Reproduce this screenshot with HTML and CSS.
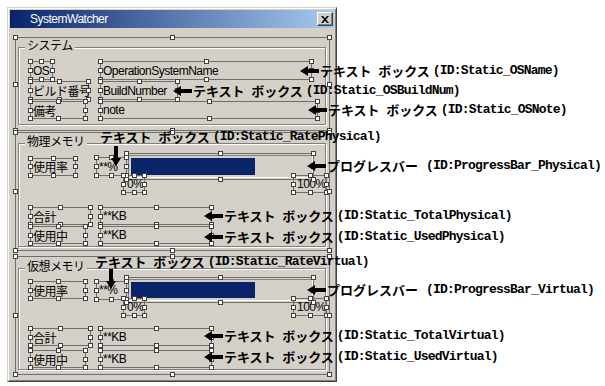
FILE: index.html
```html
<!DOCTYPE html>
<html lang="ja">
<head>
<meta charset="utf-8">
<title>SystemWatcher</title>
<link rel="stylesheet" href="styles.css">
</head>
<body>
<div class="page">
  <div class="win">
    <div class="titlebar">
      <span class="title">SystemWatcher</span>
      <span class="close"><svg width="8" height="7" viewBox="0 0 8 7"><path d="M0 0h2l2 2.3 2-2.3h2L5 3.5 8 7H6L4 4.7 2 7H0l3-3.5z" fill="#000"/></svg></span>
    </div>
    <div class="client">
      <div class="ctl grp g-sys">
        <div class="frame f-sys">
          <span class="legend">システム</span>
          <div class="form">
            <div class="ctl w23">OS</div>
            <div class="ctl w212">OperationSystemName</div>
            <div class="ctl w59">ビルド番号</div>
            <div class="ctl w78">BuildNumber</div>
            <div class="ctl w56 h18">備考</div>
            <div class="ctl w218 h18">note</div>
          </div>
        </div>
      </div>

      <div class="ctl grp g-phys">
        <div class="frame f-phys">
          <span class="legend">物理メモリ</span>
          <div class="rate">
            <div class="ctl w46 h18">使用率</div>
            <div class="ctl pct">**%</div>
            <div class="ctl prog"><div class="bar"><div class="fill" style="width:69%"></div></div></div>
          </div>
          <div class="scale">
            <div class="ctl s0">0%</div>
            <div class="ctl s100">100%</div>
          </div>
          <div class="form mem">
            <div class="ctl w61">合計</div>
            <div class="ctl w112">**KB</div>
            <div class="ctl w56">使用中</div>
            <div class="ctl w112">**KB</div>
          </div>
        </div>
      </div>

      <div class="ctl grp g-virt">
        <div class="frame f-virt">
          <span class="legend">仮想メモリ</span>
          <div class="rate">
            <div class="ctl w56 h18">使用率</div>
            <div class="ctl pct">**%</div>
            <div class="ctl prog"><div class="bar"><div class="fill" style="width:69%"></div></div></div>
          </div>
          <div class="scale">
            <div class="ctl s0">0%</div>
            <div class="ctl s100">100%</div>
          </div>
          <div class="form mem">
            <div class="ctl w61">合計</div>
            <div class="ctl w112">**KB</div>
            <div class="ctl w56">使用中</div>
            <div class="ctl w112">**KB</div>
          </div>
        </div>
      </div>
    </div>
  </div>

  <div class="note n1"><svg class="arrow" viewBox="0 0 19 10"><polygon points="0,5 8,0 8,3 19,3 19,7 8,7 8,10"/></svg><span class="jp">テキスト ボックス</span><span class="id">(ID:Static_OSName)</span></div>
  <div class="note n2"><svg class="arrow" viewBox="0 0 19 10"><polygon points="0,5 8,0 8,3 19,3 19,7 8,7 8,10"/></svg><span class="jp">テキスト ボックス</span><span class="id">(ID:Static_OSBuildNum)</span></div>
  <div class="note n3"><svg class="arrow" viewBox="0 0 19 10"><polygon points="0,5 8,0 8,3 19,3 19,7 8,7 8,10"/></svg><span class="jp">テキスト ボックス</span><span class="id">(ID:Static_OSNote)</span></div>
  <div class="note n4"><span class="jp">テキスト ボックス</span><span class="id">(ID:Static_RatePhysical)</span></div>
  <svg class="darrow d1" viewBox="0 0 10 20"><polygon points="3,0 7,0 7,12 10,12 5,20 0,12 3,12"/></svg>
  <div class="note n5"><svg class="arrow" viewBox="0 0 19 10"><polygon points="0,5 8,0 8,3 19,3 19,7 8,7 8,10"/></svg><span class="jp">プログレスバー</span><span class="id gap">(ID:ProgressBar_Physical)</span></div>
  <div class="note n6"><svg class="arrow" viewBox="0 0 19 10"><polygon points="0,5 8,0 8,3 19,3 19,7 8,7 8,10"/></svg><span class="jp">テキスト ボックス</span><span class="id">(ID:Static_TotalPhysical)</span></div>
  <div class="note n7"><svg class="arrow" viewBox="0 0 19 10"><polygon points="0,5 8,0 8,3 19,3 19,7 8,7 8,10"/></svg><span class="jp">テキスト ボックス</span><span class="id">(ID:Static_UsedPhysical)</span></div>
  <div class="note n8"><span class="jp">テキスト ボックス</span><span class="id">(ID:Static_RateVirtual)</span></div>
  <svg class="darrow d2" viewBox="0 0 10 20"><polygon points="3,0 7,0 7,12 10,12 5,20 0,12 3,12"/></svg>
  <div class="note n9"><svg class="arrow" viewBox="0 0 19 10"><polygon points="0,5 8,0 8,3 19,3 19,7 8,7 8,10"/></svg><span class="jp">プログレスバー</span><span class="id gap">(ID:ProgressBar_Virtual)</span></div>
  <div class="note n10"><svg class="arrow" viewBox="0 0 19 10"><polygon points="0,5 8,0 8,3 19,3 19,7 8,7 8,10"/></svg><span class="jp">テキスト ボックス</span><span class="id">(ID:Static_TotalVirtual)</span></div>
  <div class="note n11"><svg class="arrow" viewBox="0 0 19 10"><polygon points="0,5 8,0 8,3 19,3 19,7 8,7 8,10"/></svg><span class="jp">テキスト ボックス</span><span class="id">(ID:Static_UsedVirtual)</span></div>
</div>
</body>
</html>
```

FILE: styles.css
```css
html, body {
  margin: 0;
  background: #fff;
}

.page {
  position: relative;
  box-sizing: border-box;
  width: 605px;
  height: 386px;
  padding: 7px 0 0 7px;
  overflow: hidden;
  font-family: "Liberation Sans", "Noto Sans CJK JP", sans-serif;
  font-size: 12px;
  color: #000;
}

/* ---------- window chrome ---------- */
.win {
  box-sizing: border-box;
  width: 330px;
  height: 375px;
  padding: 2px;
  border: 1px solid;
  border-color: #d4d0c8 #404040 #404040 #d4d0c8;
  box-shadow: inset 1px 1px 0 #fff, inset -1px -1px 0 #808080;
  background: #d4d0c8;
  display: flex;
  flex-direction: column;
}

.titlebar {
  flex: none;
  height: 18px;
  display: flex;
  align-items: center;
  padding-left: 20px;
  background: linear-gradient(90deg, #0a246a, #a6caf0);
}

.title {
  color: #fff;
  font-size: 12px;
  letter-spacing: -0.5px;
  line-height: 18px;
}

.close {
  box-sizing: border-box;
  margin-left: auto;
  margin-right: 1px;
  width: 16px;
  height: 14px;
  display: flex;
  align-items: center;
  justify-content: center;
  background: #d4d0c8;
  border: 1px solid;
  border-color: #fff #404040 #404040 #fff;
  box-shadow: inset -1px -1px 0 #808080;
}

.client {
  flex: 1;
  padding: 9px 0 0 5px;
}

/* ---------- selected control (dialog editor) ---------- */
.ctl {
  position: relative;
  box-sizing: border-box;
  border: 1px solid #6e6e6e;
  display: flex;
  align-items: center;
  padding: 0 2px;
  white-space: nowrap;
  letter-spacing: -0.5px;
}

.ctl::after {
  content: "";
  position: absolute;
  inset: -3px;
  pointer-events: none;
  z-index: 2;
  background:
    linear-gradient(#fff, #fff) left 1px top 1px / 3px 3px no-repeat,
    linear-gradient(#fff, #fff) left 50% top 1px / 3px 3px no-repeat,
    linear-gradient(#fff, #fff) right 1px top 1px / 3px 3px no-repeat,
    linear-gradient(#fff, #fff) left 1px top 50% / 3px 3px no-repeat,
    linear-gradient(#fff, #fff) right 1px top 50% / 3px 3px no-repeat,
    linear-gradient(#fff, #fff) left 1px bottom 1px / 3px 3px no-repeat,
    linear-gradient(#fff, #fff) left 50% bottom 1px / 3px 3px no-repeat,
    linear-gradient(#fff, #fff) right 1px bottom 1px / 3px 3px no-repeat,
    linear-gradient(#404040, #404040) 0 0 / 5px 5px no-repeat,
    linear-gradient(#404040, #404040) 50% 0 / 5px 5px no-repeat,
    linear-gradient(#404040, #404040) 100% 0 / 5px 5px no-repeat,
    linear-gradient(#404040, #404040) 0 50% / 5px 5px no-repeat,
    linear-gradient(#404040, #404040) 100% 50% / 5px 5px no-repeat,
    linear-gradient(#404040, #404040) 0 100% / 5px 5px no-repeat,
    linear-gradient(#404040, #404040) 50% 100% / 5px 5px no-repeat,
    linear-gradient(#404040, #404040) 100% 100% / 5px 5px no-repeat;
}

/* ---------- group boxes ---------- */
.grp {
  display: block;
  padding: 0;
  width: 315px;
}

.g-sys { height: 94px; }
.g-phys { height: 119px; margin-top: 1px; }
.g-virt { height: 119px; margin-top: 5px; }

.frame {
  position: relative;
  box-sizing: border-box;
  width: 308px;
  margin-left: 2px;
  padding-left: 11px;
  border: 1px solid #808080;
  box-shadow: inset 1px 1px 0 #fff, 1px 1px 0 #fff;
}

.f-sys { margin-top: 9px; height: 78px; padding-top: 13px; }
.f-phys { margin-top: 10px; height: 104px; padding-top: 9px; }
.f-virt { margin-top: 11px; height: 102px; padding-top: 8px; }

.legend {
  position: absolute;
  left: 6px;
  top: -9px;
  padding: 0 2px;
  line-height: 14px;
  background: #d4d0c8;
  letter-spacing: -0.5px;
}

/* ---------- label / value grids ---------- */
.form {
  display: grid;
  grid-template-columns: 70px max-content;
  row-gap: 1px;
  align-items: start;
  justify-items: start;
}

.form .ctl { height: 19px; }
.form .h18 { height: 18px; }

.mem { margin-top: 14px; }
.mem .ctl { height: 18px; }
.f-virt .mem { margin-top: 12px; row-gap: 4px; }

.w23 { width: 23px; }
.w46 { width: 46px; }
.w56 { width: 56px; }
.w59 { width: 59px; }
.w61 { width: 61px; }
.w78 { width: 78px; }
.w112 { width: 112px; }
.w212 { width: 212px; }
.w218 { width: 218px; }
.h18 { height: 18px; }

/* ---------- usage rate row ---------- */
.rate {
  display: grid;
  grid-template-columns: 66px 30px auto;
  grid-template-rows: 27px;
  align-items: center;
  justify-items: start;
}

.f-virt .rate { grid-template-rows: 26px; }

.pct {
  width: 31px;
  height: 19px;
}

.prog {
  align-self: stretch;
  width: 188px;
  padding: 1px 0 1px 1px;
  align-items: stretch;
}

.bar {
  flex: 1;
  box-sizing: border-box;
  padding: 2px;
  border: 1px solid;
  border-color: #808080 #fff #fff #808080;
  display: flex;
}

.fill {
  background: #0a246a;
}

.scale {
  display: flex;
  margin-top: -5px;
}

.s0 {
  margin-left: 93px;
  width: 22px;
  height: 18px;
  padding-left: 3px;
}

.s100 {
  margin-left: 148px;
  width: 34px;
  height: 18px;
  padding-left: 3px;
}

/* ---------- annotations ---------- */
.note {
  position: absolute;
  z-index: 5;
  display: flex;
  align-items: center;
  height: 14px;
  font-size: 13px;
  font-weight: bold;
  line-height: 14px;
  white-space: nowrap;
  color: #000;
}

.note .jp {
  font-family: "Noto Sans CJK JP", sans-serif;
  word-spacing: 3.6px;
}

.note .id {
  margin-left: 3px;
  font-family: "Liberation Mono", monospace;
  letter-spacing: -0.8px;
}

.note .gap {
  margin-left: 8px;
}

.arrow {
  flex: none;
  width: 19px;
  height: 10px;
  margin-right: 1px;
  fill: #000;
}

.darrow {
  position: absolute;
  z-index: 5;
  width: 10px;
  height: 20px;
  fill: #000;
}

.n1 { left: 300px; top: 64px; }
.n2 { left: 173px; top: 84px; }
.n3 { left: 308px; top: 103px; }
.n4 { left: 100px; top: 130px; }
.n5 { left: 307px; top: 159px; }
.n6 { left: 204px; top: 209px; }
.n7 { left: 204px; top: 230px; }
.n8 { left: 95px; top: 255px; }
.n9 { left: 307px; top: 283px; }
.n10 { left: 204px; top: 329px; }
.n11 { left: 204px; top: 350px; }

.d1 { left: 111px; top: 146px; }
.d2 { left: 106px; top: 269px; }
```
